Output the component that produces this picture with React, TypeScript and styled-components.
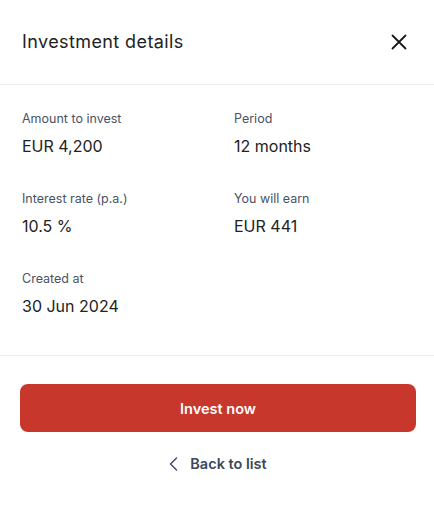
import React from "react";
import styled, { createGlobalStyle } from "styled-components";

const GlobalStyle = createGlobalStyle`
  html, body {
    margin: 0;
    padding: 0;
    background: #ffffff;
  }
  body {
    font-family: Inter, "Noto Sans", "Liberation Sans", sans-serif;
    -webkit-font-smoothing: antialiased;
  }
`;

const Panel = styled.div`
  width: 434px;
  height: 509px;
  background: #ffffff;
  display: flex;
  flex-direction: column;
`;

const Header = styled.div`
  height: 84px;
  display: flex;
  align-items: center;
  justify-content: space-between;
  padding: 0 22px;
  border-bottom: 1px solid #ececec;
`;

const Title = styled.h2`
  margin: 0;
  margin-top: -2px;
  font-size: 18px;
  font-weight: 400;
  color: #222222;
  letter-spacing: 0.4px;
`;

const CloseButton = styled.button`
  width: 24px;
  height: 24px;
  padding: 0;
  margin-right: 1px;
  border: none;
  background: transparent;
  cursor: pointer;
  display: flex;
  align-items: center;
  justify-content: center;
`;

const Details = styled.div`
  display: grid;
  grid-template-columns: 212px 1fr;
  row-gap: 34px;
  padding: 25px 22px 39px;
  border-bottom: 1px solid #ececec;
`;

const Field = styled.div`
  display: flex;
  flex-direction: column;
  gap: 8px;
`;

const Label = styled.span`
  font-size: 12.5px;
  line-height: 18px;
  color: #4a5266;
`;

const Value = styled.span`
  font-size: 16px;
  line-height: 20px;
  color: #222222;
`;

const Actions = styled.div`
  display: flex;
  flex-direction: column;
  align-items: center;
  padding: 28px 18px 0 20px;
  gap: 23px;
`;

const PrimaryButton = styled.button`
  width: 100%;
  height: 48px;
  border: none;
  border-radius: 8px;
  background: #c8372b;
  color: #ffffff;
  font-family: inherit;
  font-size: 14.5px;
  font-weight: 600;
  cursor: pointer;
`;

const BackLink = styled.button`
  display: flex;
  align-items: center;
  gap: 12px;
  border: none;
  background: transparent;
  padding: 0;
  font-family: inherit;
  font-size: 14.5px;
  font-weight: 600;
  color: #3b475c;
  cursor: pointer;
`;

const fields = [
  { label: "Amount to invest", value: "EUR 4,200" },
  { label: "Period", value: "12 months" },
  { label: "Interest rate (p.a.)", value: "10.5 %" },
  { label: "You will earn", value: "EUR 441" },
  { label: "Created at", value: "30 Jun 2024" },
];

const App = () => {
  return (
    <>
      <GlobalStyle />
      <Panel>
        <Header>
          <Title>Investment details</Title>
          <CloseButton aria-label="Close">
            <svg width="16" height="16" viewBox="0 0 16 16">
              <path
                d="M1.5 1.5 L14.5 14.5 M14.5 1.5 L1.5 14.5"
                stroke="#1a1a1a"
                strokeWidth="1.8"
                strokeLinecap="round"
              />
            </svg>
          </CloseButton>
        </Header>
        <Details>
          {fields.map((f) => (
            <Field key={f.label}>
              <Label>{f.label}</Label>
              <Value>{f.value}</Value>
            </Field>
          ))}
        </Details>
        <Actions>
          <PrimaryButton>Invest now</PrimaryButton>
          <BackLink>
            <svg width="9" height="14" viewBox="0 0 9 14">
              <path
                d="M7.5 1 L1.5 7 L7.5 13"
                fill="none"
                stroke="#3b475c"
                strokeWidth="1.4"
                strokeLinecap="round"
                strokeLinejoin="round"
              />
            </svg>
            Back to list
          </BackLink>
        </Actions>
      </Panel>
    </>
  );
};

export default App;
